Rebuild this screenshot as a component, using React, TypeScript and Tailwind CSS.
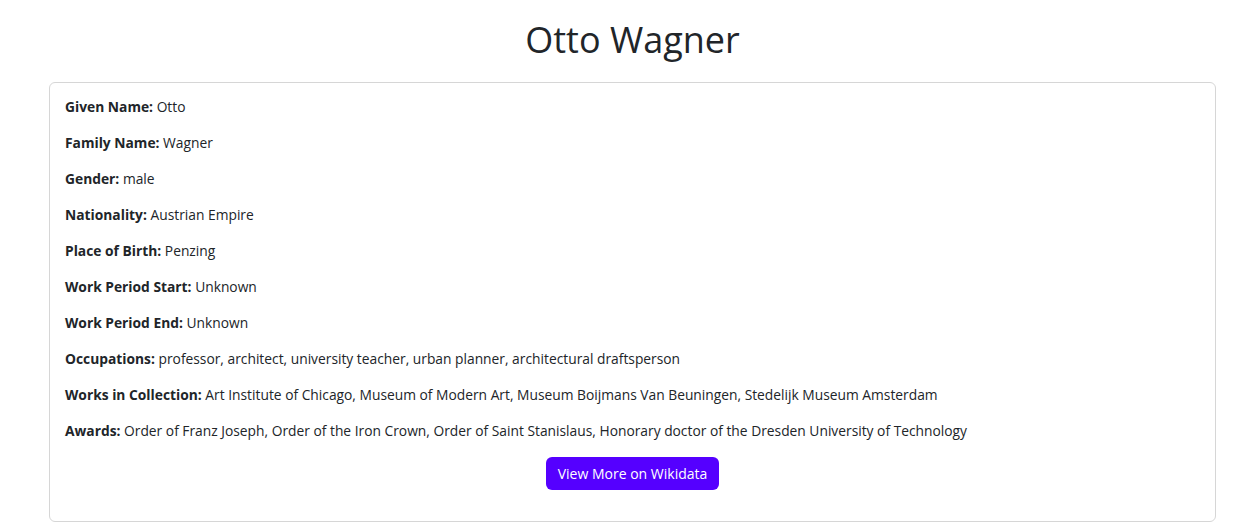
const rows: [string, string][] = [
  ["Given Name:", "Otto"],
  ["Family Name:", "Wagner"],
  ["Gender:", "male"],
  ["Nationality:", "Austrian Empire"],
  ["Place of Birth:", "Penzing"],
  ["Work Period Start:", "Unknown"],
  ["Work Period End:", "Unknown"],
  ["Occupations:", "professor, architect, university teacher, urban planner, architectural draftsperson"],
  ["Works in Collection:", "Art Institute of Chicago, Museum of Modern Art, Museum Boijmans Van Beuningen, Stedelijk Museum Amsterdam"],
  ["Awards:", "Order of Franz Joseph, Order of the Iron Crown, Order of Saint Stanislaus, Honorary doctor of the Dresden University of Technology"],
];

export default function App() {
  return (
    <div className="min-h-[528px] bg-white text-[#212529] font-['Open_Sans',sans-serif]">
      <div className="ml-[49px] w-[1167px]">
        <h1 className="pt-[18px] pb-[20px] text-center text-[36px] leading-[44px] font-normal">Otto Wagner</h1>
        <div className="rounded-[6px] border border-[#d6d6d6] px-[15px] pt-[14px] pb-[31px]">
          {rows.map(([label, value]) => (
            <p key={label} className="mb-[16px] text-[13.8px] leading-[20px]">
              <span className="font-bold">{label}</span> {value}
            </p>
          ))}
          <div className="flex justify-center">
            <button className="h-[33px] w-[173px] rounded-[6px] bg-[#5500ff] text-[14px] text-white">
              View More on Wikidata
            </button>
          </div>
        </div>
      </div>
    </div>
  );
}
